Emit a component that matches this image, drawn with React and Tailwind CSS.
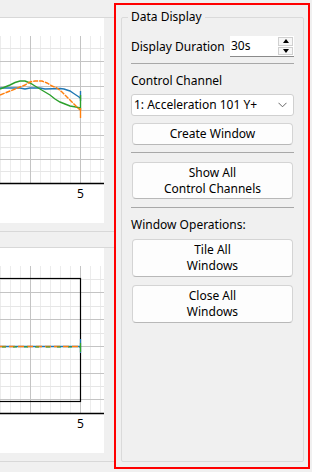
import React from 'react';

const FONT = { fontFamily: '"Noto Sans", "Open Sans", sans-serif' };

const BLUE = '#1f77b4';
const ORANGE = '#ff7f0e';
const GREEN = '#2ca02c';

// vertical grid: minor every 10px, majors at 30 and 80
const vMinor = [0, 10, 20, 40, 50, 60, 70, 90, 100];
const vMajor = [30, 80];

const PlotGrid = ({ top, bottom, major, minor }) => (
    <g>
        {vMinor.map(x => <line key={'vm' + x} x1={x + 0.5} x2={x + 0.5} y1={top} y2={bottom} stroke="#ececec" />)}
        {minor.map(y => <line key={'hm' + y} x1={0} x2={104} y1={y + 0.5} y2={y + 0.5} stroke="#e6e6e6" />)}
        {major.map(y => <line key={'hM' + y} x1={0} x2={104} y1={y + 0.5} y2={y + 0.5} stroke="#c4c4c4" />)}
        {vMajor.map(x => <line key={'vM' + x} x1={x + 0.5} x2={x + 0.5} y1={top} y2={bottom} stroke="#c4c4c4" />)}
        <line x1={0} x2={104} y1={bottom + 0.5} y2={bottom + 0.5} stroke="#000" strokeWidth="1.4" />
    </g>
);

const pts = arr => arr.map(([x, y]) => `${x},${y}`).join(' ');

const TopPlot = () => (
    <svg width="104" height="205" className="block">
        <g transform="translate(0,-18)">
            <PlotGrid top={36} bottom={183} major={[61, 86, 110, 135, 159]} minor={[48, 73, 98, 122, 147, 171]} />
            <polyline fill="none" stroke={BLUE} strokeWidth="1.4" points={pts([[0, 88], [20, 88], [25, 89], [30, 88], [40, 88], [45, 89], [60, 88.5], [64, 89], [67, 90], [70, 91], [73, 93], [76, 95], [79, 97], [80, 98]])} />
            <polyline fill="none" stroke={GREEN} strokeWidth="1.4" points={pts([[0, 89], [5, 87], [10, 85], [15, 82.5], [20, 81], [25, 81], [30, 83], [35, 86], [40, 89], [45, 92], [50, 95], [55, 99], [60, 102], [65, 104], [70, 106], [76, 107], [80, 108]])} />
            <polyline fill="none" stroke={ORANGE} strokeWidth="1.4" strokeDasharray="5 1" points={pts([[0, 95], [5, 93], [10, 91], [15, 89], [20, 87], [25, 85], [30, 82], [35, 81], [42, 81], [47, 83], [52, 86], [57, 88], [62, 92], [66, 96], [70, 100], [74, 104], [78, 108], [80, 110]])} />
            <line x1="80.5" x2="80.5" y1="91" y2="101" stroke={BLUE} strokeWidth="1.4" />
            <line x1="80.5" x2="80.5" y1="95" y2="110" stroke={GREEN} strokeWidth="1.4" />
            <line x1="80.5" x2="80.5" y1="108" y2="118" stroke={ORANGE} strokeWidth="1.4" />
            <text x="80.5" y="197.5" textAnchor="middle" fontSize="12" fill="#000" style={FONT}>5</text>
        </g>
    </svg>
);

const BottomPlot = () => (
    <svg width="104" height="205" className="block">
        <g transform="translate(0,-248)">
            <PlotGrid top={266} bottom={413} major={[292, 319, 346, 373, 399]} minor={[279, 306, 333, 359, 386]} />
            <rect x="-2" y="278.5" width="82.5" height="123" fill="none" stroke="#000" strokeWidth="1.2" />
            <line x1="0" x2="80" y1="346.5" y2="346.5" stroke={BLUE} strokeWidth="1.5" />
            <line x1="0" x2="80" y1="346.5" y2="346.5" stroke={ORANGE} strokeWidth="1.5" strokeDasharray="6 3" />
            <line x1="2" x2="80" y1="347" y2="347" stroke={GREEN} strokeWidth="1.2" strokeDasharray="4 7" />
            <line x1="80.5" x2="80.5" y1="339" y2="353" stroke={BLUE} strokeWidth="1.2" />
            <line x1="80.5" x2="80.5" y1="343" y2="352" stroke={GREEN} strokeWidth="1.2" />
            <text x="80.5" y="427.5" textAnchor="middle" fontSize="12" fill="#000" style={FONT}>5</text>
        </g>
    </svg>
);

const Button = ({ children, h }) => (
    <button className={`mx-px ${h} shrink-0 rounded-[4px] border border-[#d4d4d4] border-b-[#b8b8b8] bg-[#fdfdfd] text-[12px] leading-[16px] text-black flex flex-col items-center justify-center`}>
        {children}
    </button>
);

const Separator = ({ mt }) => <div className={`${mt} h-px shrink-0 bg-[#a8a8a8]`} />;

export default function App() {
    return (
        <div className="w-[312px] h-[472px] bg-[#f0f0f0] flex overflow-hidden text-black" style={FONT}>
            {/* MDI area with the plot windows */}
            <div className="w-[114px] shrink-0 flex flex-col">
                <div className="h-[17px]" />
                <div className="h-px bg-[#d8d8d8]" />
                <div className="w-[104px] h-[205px] bg-white">
                    <TopPlot />
                </div>
                <div className="h-[8px]" />
                <div className="h-px bg-[#d8d8d8]" />
                <div className="h-[15px]" />
                <div className="h-px bg-[#d8d8d8]" />
                <div className="w-[104px] h-[205px] bg-white">
                    <BottomPlot />
                </div>
                <div className="h-[8px]" />
                <div className="h-px bg-[#d8d8d8]" />
            </div>

            {/* Control panel */}
            <div className="pt-[3px]">
                <div className="w-[196px] h-[466px] border-2 border-[#ff0000] pl-[5px] pt-[12px]">
                    <div className="relative w-[183px] h-[445px] border border-[#dadada] rounded-[2px] px-[9px] pt-[18px] flex flex-col">
                        <div className="absolute left-[6px] -top-[9px] px-[3px] bg-[#f0f0f0] text-[12px] leading-[16px]">Data Display</div>

                        <div className="h-[21px] flex items-center justify-between">
                            <span className="text-[12px] leading-[16px]">Display Duration</span>
                            <div className="w-[64px] h-[21px] bg-white border-b border-[#8a8a8a] flex items-center">
                                <span className="pl-[1px] flex-1 text-[12px] leading-[16px]">30s</span>
                                <div className="w-[16px] h-[20px] flex flex-col gap-px py-px pr-px">
                                    <div className="flex-1 border border-[#d0d0d0] bg-[#f7f7f7] flex items-center justify-center">
                                        <svg width="6" height="4" viewBox="0 0 6 4"><path d="M3 0 L6 4 L0 4 Z" fill="#000" /></svg>
                                    </div>
                                    <div className="flex-1 border border-[#d0d0d0] bg-[#f7f7f7] flex items-center justify-center">
                                        <svg width="6" height="4" viewBox="0 0 6 4"><path d="M0 0 L6 0 L3 4 Z" fill="#000" /></svg>
                                    </div>
                                </div>
                            </div>
                        </div>

                        <Separator mt="mt-[6px]" />

                        <div className="mt-[9px] h-[16px] text-[12px] leading-[16px]">Control Channel</div>

                        <div className="mt-[5px] h-[22px] shrink-0 bg-white border border-[#d0d0d0] rounded-[3px] flex items-center justify-between pl-[2px] pr-[6px]">
                            <span className="text-[12px] leading-[16px]">1: Acceleration 101 Y+</span>
                            <svg width="9" height="6" viewBox="0 0 9 6"><path d="M0.5 0.8 L4.5 4.8 L8.5 0.8" fill="none" stroke="#555" strokeWidth="0.9" /></svg>
                        </div>

                        <div className="mt-[7px] flex flex-col">
                            <Button h="h-[22px]">Create Window</Button>
                        </div>

                        <Separator mt="mt-[7px]" />

                        <div className="mt-[9px] flex flex-col">
                            <Button h="h-[37px]"><span>Show All</span><span>Control Channels</span></Button>
                        </div>

                        <Separator mt="mt-[8px]" />

                        <div className="mt-[9px] h-[16px] text-[12px] leading-[16px]">Window Operations:</div>

                        <div className="mt-[6px] flex flex-col">
                            <Button h="h-[38px]"><span>Tile All</span><span>Windows</span></Button>
                        </div>
                        <div className="mt-[8px] flex flex-col">
                            <Button h="h-[38px]"><span>Close All</span><span>Windows</span></Button>
                        </div>
                    </div>
                </div>
            </div>
        </div>
    );
}
